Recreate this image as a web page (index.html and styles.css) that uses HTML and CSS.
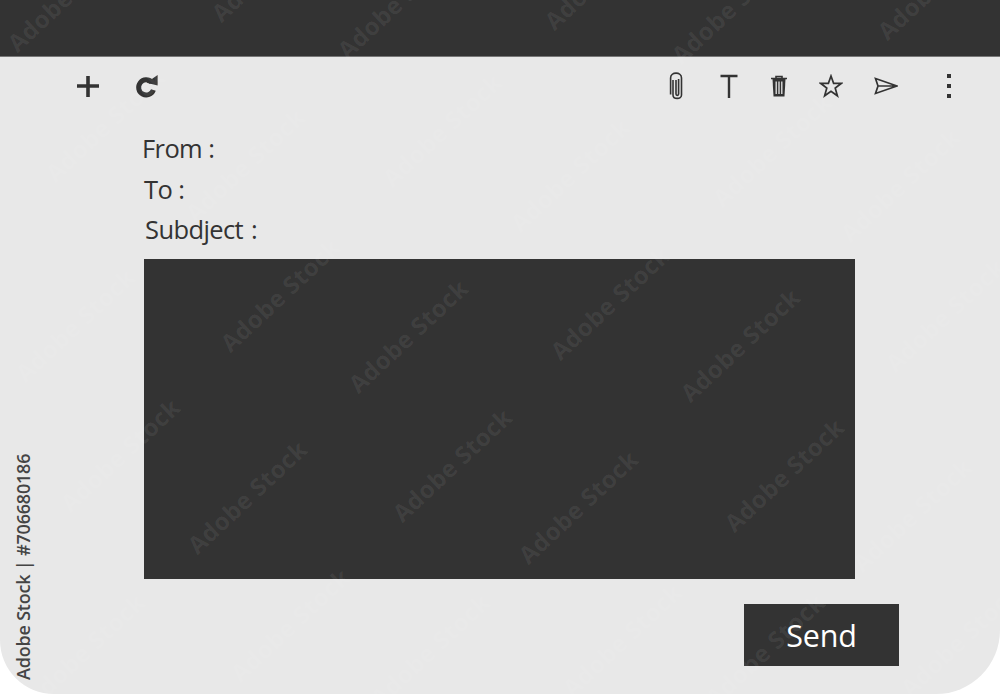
FILE: index.html
```html
<!DOCTYPE html>
<html lang="en">
<head>
<meta charset="utf-8">
<title>Compose message</title>
<link rel="stylesheet" href="styles.css">
</head>
<body>
<main class="window">
  <header class="topbar"></header>
  <nav class="toolbar">
    <div class="tools-left">
      <svg class="icon plus" width="24" height="24" viewBox="0 0 24 24"><path d="M1 12H23M12 2V23" fill="none" stroke="#333" stroke-width="3.6"/></svg>
      <svg class="icon refresh" width="24" height="26" viewBox="0 0 24 26"><path d="M16.8 9.2A7.6 7.6 0 1 0 18.4 17" fill="none" stroke="#333" stroke-width="5"/><path d="M11.5 9.8L22.6 2V12.4Z" fill="#333"/></svg>
    </div>
    <div class="tools-right">
      <svg class="icon clip" width="16" height="30" viewBox="0 0 16 30"><path d="M5 9V24C5 28.5 13.5 28.5 13.5 24V7C13.5 0.5 2.6 0.5 2.6 7V23.5M8 9V23C8 24.8 10.6 24.8 10.6 23V8" fill="none" stroke="#333" stroke-width="1.6"/></svg>
      <svg class="icon type" width="18" height="24" viewBox="0 0 18 24"><path d="M0.5 2H17.5M9 2V24" fill="none" stroke="#333" stroke-width="2.4"/></svg>
      <svg class="icon trash" width="18" height="24" viewBox="0 0 18 24"><path d="M1 4.5H17M6 4.5V2.5H12V4.5" fill="none" stroke="#333" stroke-width="1.6"/><path d="M2.5 5H15.5L14.5 22.5H3.5Z" fill="#333"/><path d="M6.2 7.5V20M9 7.5V20M11.8 7.5V20" fill="none" stroke="#e8e8e8" stroke-width="1.3"/></svg>
      <svg class="icon star" width="24" height="24" viewBox="0 0 24 24"><path d="M12 2L14.6 9.3H22.4L16.2 14L18.4 21.8L12 17.2L5.6 21.8L7.8 14L1.6 9.3H9.4Z" fill="none" stroke="#333" stroke-width="1.7"/></svg>
      <svg class="icon send" width="24" height="20" viewBox="0 0 24 20"><path d="M1.5 2.5L23 10L1.5 17.5L4 10ZM4 10H23" fill="none" stroke="#333" stroke-width="1.7"/></svg>
      <div class="dots"><i></i><i></i><i></i></div>
    </div>
  </nav>
  <section class="form">
    <div class="label from">From<span class="colon">:</span></div>
    <div class="label to">To<span class="colon">:</span></div>
    <div class="label subject">Subdject<span class="colon wide">:</span></div>
    <div class="body-box"></div>
    <div class="actions"><button class="send-btn" type="button">Send</button></div>
  </section>
  <div class="credit">Adobe Stock | #706680186</div>
  <div class="marks" aria-hidden="true">
    <span class="wm w1">Adobe Stock</span><span class="wm w2">Adobe Stock</span><span class="wm w3">Adobe Stock</span><span class="wm w4">Adobe Stock</span>
    <span class="wm w5">Adobe Stock</span><span class="wm w6">Adobe Stock</span><span class="wm w7">Adobe Stock</span><span class="wm w8">Adobe Stock</span>
    <span class="wm w9">Adobe Stock</span><span class="wm w10">Adobe Stock</span><span class="wm w11">Adobe Stock</span><span class="wm w12">Adobe Stock</span>
    <span class="wm w13">Adobe Stock</span><span class="wm w14">Adobe Stock</span><span class="wm w15">Adobe Stock</span><span class="wm w16">Adobe Stock</span>
    <span class="wm w17">Adobe Stock</span><span class="wm w18">Adobe Stock</span><span class="wm w19">Adobe Stock</span><span class="wm w20">Adobe Stock</span>
    <span class="wm w21">Adobe Stock</span><span class="wm w22">Adobe Stock</span><span class="wm w23">Adobe Stock</span><span class="wm w24">Adobe Stock</span>
    <span class="wm w25">Adobe Stock</span><span class="wm w26">Adobe Stock</span><span class="wm w27">Adobe Stock</span><span class="wm w28">Adobe Stock</span>
    <span class="wm w29">Adobe Stock</span><span class="wm w30">Adobe Stock</span>
  </div>
</main>
</body>
</html>
```
FILE: styles.css
```css
* { box-sizing: border-box; }
html, body { margin: 0; height: 100%; background: #fff; overflow: hidden; }
body { font-family: "Open Sans", "Noto Sans", sans-serif; color: #333; }

.window {
  position: relative;
  width: 1000px;
  height: 694px;
  background: #e8e8e8;
  border-radius: 0 0 64px 54px;
  overflow: hidden;
  display: flex;
  flex-direction: column;
}
.topbar { height: 57px; flex: none; background: #333; border-bottom: 1px solid #777; }

.toolbar {
  height: 58px;
  flex: none;
  display: flex;
  justify-content: space-between;
  align-items: center;
  padding: 0 43px 0 76px;
}
.tools-left, .tools-right { display: flex; align-items: center; }
.icon { display: block; flex: none; }
.tools-left { gap: 35px; }
.tools-right .clip { margin-right: 36px; }
.tools-right .type { margin-right: 32px; }
.tools-right .trash { margin-right: 31px; }
.tools-right .star { margin-right: 31px; }
.tools-right .send { margin-right: 43px; }
.dots { display: flex; flex-direction: column; gap: 6px; padding: 0 6px; width: 16px; }
.dots i { display: block; width: 4px; height: 4px; background: #333; }

.form { padding: 13px 0 0 144px; display: flex; flex-direction: column; flex: 1; }
.label { font-size: 25.5px; line-height: 40px; height: 40px; letter-spacing: -0.6px; white-space: nowrap; }
.label.from { margin-left: -2px; height: 41px; }
.label.to { height: 40px; }
.label.subject { margin-left: 1px; height: 50px; }
.colon { margin-left: 6px; letter-spacing: 0; }
.colon.wide { margin-left: 8px; }
.body-box { width: 711px; height: 320px; background: #333; flex: none; }
.actions { width: 755px; display: flex; justify-content: flex-end; padding-top: 25px; }
.send-btn {
  width: 155px; height: 62px; border: 0; padding: 0;
  background: #333; color: #fff;
  font-family: inherit; font-size: 30.5px; letter-spacing: -0.2px;
}

.credit {
  position: absolute; left: 12px; top: 680px;
  transform-origin: 0 0; transform: rotate(-90deg);
  font-size: 18px; line-height: 22px; font-weight: 600;
  letter-spacing: -0.2px;
  color: #444; white-space: nowrap;
  width: 226px;
}

.marks { position: absolute; inset: 0; pointer-events: none; overflow: hidden; }
.wm {
  position: absolute;
  width: 200px; margin: -15px 0 0 -100px;
  text-align: center;
  font-size: 24px; line-height: 30px; font-weight: 700;
  letter-spacing: 0.4px;
  color: rgba(255,255,255,.07);
  transform: rotate(-43deg);
  white-space: nowrap;
}
.w1 { left: 67px; top: -5px; } .w2 { left: 271px; top: -35px; } .w3 { left: 397px; top: 2px; } .w4 { left: 604px; top: -27px; } .w5 { left: 731px; top: 7px; }
.w6 { left: 937px; top: -17px; } .w7 { left: 105px; top: 125px; } .w8 { left: 245px; top: 165px; } .w9 { left: 442px; top: 130px; } .w10 { left: 570px; top: 175px; }
.w11 { left: 772px; top: 150px; } .w12 { left: 900px; top: 185px; } .w13 { left: 75px; top: 325px; } .w14 { left: 280px; top: 295px; } .w15 { left: 408px; top: 336px; }
.w16 { left: 610px; top: 303px; } .w17 { left: 740px; top: 345px; } .w18 { left: 945px; top: 315px; } .w19 { left: 120px; top: 455px; } .w20 { left: 247px; top: 497px; }
.w21 { left: 452px; top: 465px; } .w22 { left: 578px; top: 507px; } .w23 { left: 784px; top: 475px; } .w24 { left: 912px; top: 515px; } .w25 { left: 85px; top: 650px; }
.w26 { left: 290px; top: 625px; } .w27 { left: 430px; top: 650px; } .w28 { left: 622px; top: 640px; } .w29 { left: 765px; top: 650px; } .w30 { left: 960px; top: 640px; }
```
